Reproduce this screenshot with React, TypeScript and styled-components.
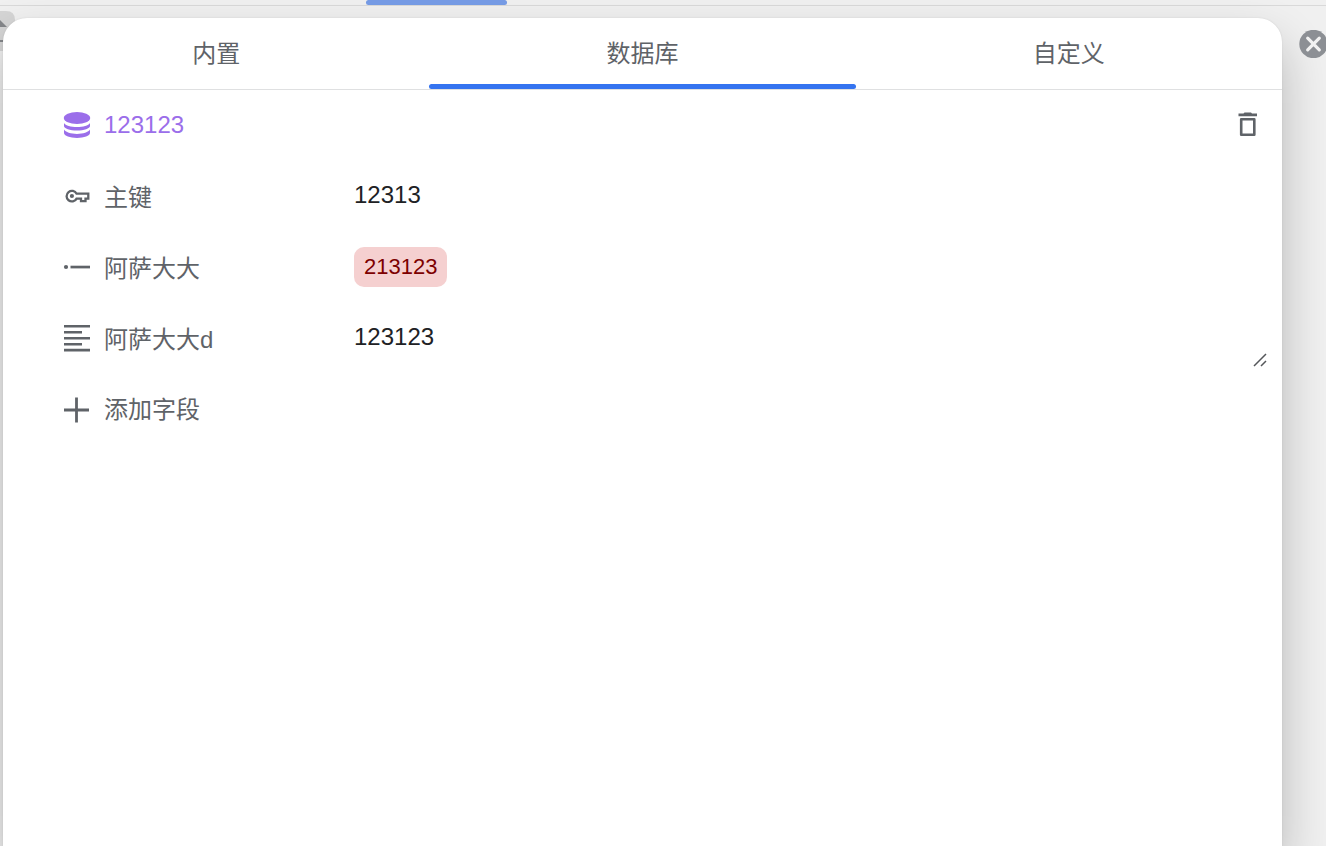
import React, { useState } from "react";
import styled, { createGlobalStyle } from "styled-components";

const GlobalStyle = createGlobalStyle`
  * { box-sizing: border-box; }
  body {
    margin: 0;
    background: #f0f0f0;
    font-family: "Liberation Sans", "Noto Sans CJK SC", sans-serif;
    font-size: 24px;
    line-height: 32px;
    color: #5f6368;
  }
  button, input, textarea { font: inherit; color: inherit; }
`;

const Page = styled.div`
  min-height: 100vh;
  display: flex;
  flex-direction: column;
  overflow: hidden;
`;

const TopBar = styled.header`
  height: 6px;
  border-bottom: 1px solid #d9d9d9;
  display: grid;
  grid-template-columns: 366px 141px 1fr;
`;

const TopIndicator = styled.span`
  grid-column: 2;
  height: 5px;
  border-radius: 3px;
  background: #769ce6;
`;

const Stage = styled.main`
  position: relative;
  flex: 1;
  display: grid;
  grid-template-columns: minmax(0, 1fr) 44px;
  padding: 12px 0 0 3px;
`;

const Behind = styled.svg`
  position: absolute;
  left: 0;
  top: 5px;
`;

const Dialog = styled.section`
  position: relative;
  background: #fff;
  border-radius: 24px 24px 0 0;
  box-shadow: 0 24px 48px rgba(0, 0, 0, 0.24), 0 0 2px rgba(0, 0, 0, 0.1);
`;

const Tabs = styled.nav`
  display: grid;
  grid-template-columns: repeat(3, 1fr);
  border-bottom: 1px solid #dfe0e1;
`;

const Tab = styled.button<{ $active: boolean }>`
  height: 71px;
  display: flex;
  flex-direction: column;
  align-items: center;
  justify-content: space-between;
  padding: 20px 0 0;
  border: 0;
  background: none;
  cursor: pointer;
  &::after {
    content: "";
    width: 100%;
    height: 5px;
    border-radius: 3px;
    background: ${(p) => (p.$active ? "#3574f0" : "transparent")};
  }
`;

const Body = styled.div`
  padding: 0 14px 0 60px;
`;

const Row = styled.div`
  min-height: 71px;
  display: grid;
  grid-template-columns: 28px 237px minmax(0, 1fr);
  column-gap: 13px;
  align-items: center;
`;

const TitleRow = styled(Row)`
  min-height: 70px;
  grid-template-columns: 28px minmax(0, 1fr) 40px;
  color: #9b6eea;
`;

const Title = styled.h1`
  margin: 0;
  font-size: 24px;
  font-weight: 400;
`;

const Label = styled.label`
  padding-top: 4px;
`;

const TextInput = styled.input`
  width: 100%;
  height: 40px;
  padding: 0 0 2px;
  border: 0;
  outline: 0;
  background: none;
  color: #202124;
`;

const TextAreaWrap = styled.div`
  position: relative;
  height: 60px;
`;

const TextArea = styled.textarea`
  display: block;
  width: 100%;
  height: 60px;
  padding: 13px 0;
  border: 0;
  outline: 0;
  resize: none;
  background: none;
  color: #202124;
`;

const Grip = styled.svg`
  position: absolute;
  right: 0;
  bottom: 0;
`;

const Tag = styled.button`
  justify-self: start;
  height: 40px;
  padding: 0 10px;
  border: 0;
  border-radius: 10px;
  background: #f5d0d0;
  color: #7d0000;
  font-size: 22px;
`;

const IconButton = styled.button`
  display: grid;
  place-items: center;
  height: 40px;
  padding: 0;
  border: 0;
  background: none;
  color: #5f6368;
  cursor: pointer;
`;

const AddButton = styled.button`
  display: flex;
  align-items: center;
  gap: 13px;
  height: 74px;
  padding: 0;
  border: 0;
  background: none;
  cursor: pointer;
`;

const CloseButton = styled.button`
  position: relative;
  width: 28px;
  height: 28px;
  margin: 12px 0 0 17px;
  padding: 0;
  border: 0;
  background: none;
  cursor: pointer;
`;

const Icon = styled.svg`
  display: block;
  width: 28px;
  height: 28px;
  flex: none;
`;

const DatabaseIcon = () => (
  <Icon viewBox="0 0 28 28" fill="currentColor" aria-hidden="true">
    <ellipse cx="14" cy="7" rx="13.200" ry="6" />
    <path d="M1 12c1.500 2.600 7 4 13 4s11.500-1.400 13-4v3c0 2.700-6 4.500-13 4.500S1 17.700 1 15z" />
    <path d="M1 18.600c1.500 2.800 7 4.300 13 4.300s11.500-1.500 13-4.300v3.500c0 2.800-6 4.900-13 4.900S1 24.900 1 22.100z" />
  </Icon>
);

const KeyIcon = () => (
  <Icon viewBox="0 0 28 28" fill="none" stroke="currentColor" strokeWidth="2.300" aria-hidden="true">
    <path d="M13.600 11.700A5.300 5.300 0 1 0 13.600 16.600H18V19.200H22.500V16.600H25.300V11.700Z" />
    <circle cx="8.900" cy="14" r="2.100" fill="currentColor" stroke="none" />
  </Icon>
);

const SingleLineIcon = () => (
  <Icon viewBox="0 0 28 28" fill="currentColor" aria-hidden="true">
    <circle cx="3" cy="14" r="2.100" />
    <path d="M7.500 12.700H27v2.700H7.500z" />
  </Icon>
);

const TextIcon = () => (
  <Icon viewBox="0 0 28 28" fill="currentColor" aria-hidden="true">
    <path d="M1 .900h26v2.700H1zM1 6.900h18v2.700H1zM1 12.900h26v2.700H1zM1 18.900h18v2.700H1zM1 24.700h26v2.700H1z" />
  </Icon>
);

const PlusIcon = () => (
  <Icon viewBox="0 0 28 28" stroke="currentColor" strokeWidth="2.800" aria-hidden="true">
    <path d="M1 14H26M13.500 1.500V26.500" />
  </Icon>
);

const TrashIcon = () => (
  <Icon viewBox="0 0 28 28" fill="none" aria-hidden="true">
    <path d="M9.500 2.500 10.500 1.500H17L18 2.500H23V5.300H4.500V2.500Z" fill="currentColor" />
    <path d="M7.200 8.200H20.300V23.800H7.200Z" stroke="currentColor" strokeWidth="2.600" strokeLinejoin="round" />
  </Icon>
);

const CloseIcon = () => (
  <Icon viewBox="0 0 28 28" aria-hidden="true">
    <circle cx="14.500" cy="14" r="14.200" fill="#8c8f94" />
    <path d="M8.700 8.200 20.300 19.800M20.300 8.200 8.700 19.800" stroke="#f2f2f2" strokeWidth="3.200" strokeLinecap="round" />
  </Icon>
);

const tabs = ["内置", "数据库", "自定义"];

export default function App() {
  const [active, setActive] = useState(1);
  return (
    <>
      <GlobalStyle />
      <Page>
        <TopBar>
          <TopIndicator />
        </TopBar>
        <Stage>
          <Behind width="20" height="44" aria-hidden="true">
            <path d="M0 0H6Q15 0 15 9V40H0Z" fill="#d5d5d5" />
            <path d="M0 9 7 16H0Z" fill="#85878a" />
            <path d="M0 29H3V31H0Z" fill="#85878a" />
          </Behind>
          <Dialog>
            <Tabs role="tablist">
              {tabs.map((name, i) => (
                <Tab
                  key={name}
                  type="button"
                  role="tab"
                  aria-selected={i === active}
                  $active={i === active}
                  onClick={() => setActive(i)}
                >
                  {name}
                </Tab>
              ))}
            </Tabs>
            <Body>
              <TitleRow>
                <DatabaseIcon />
                <Title>123123</Title>
                <IconButton type="button" aria-label="删除">
                  <TrashIcon />
                </IconButton>
              </TitleRow>
              <Row>
                <KeyIcon />
                <Label htmlFor="key">主键</Label>
                <TextInput id="key" defaultValue="12313" />
              </Row>
              <Row>
                <SingleLineIcon />
                <Label htmlFor="tag">阿萨大大</Label>
                <Tag id="tag" type="button">213123</Tag>
              </Row>
              <Row>
                <TextIcon />
                <Label htmlFor="text">阿萨大大d</Label>
                <TextAreaWrap>
                  <TextArea id="text" defaultValue="123123" />
                  <Grip width="16" height="16" fill="none" stroke="#55575a" strokeWidth="1.500" aria-hidden="true">
                    <path d="M2 14 14 2M9 14 14 9" />
                  </Grip>
                </TextAreaWrap>
              </Row>
              <AddButton type="button">
                <PlusIcon />
                添加字段
              </AddButton>
            </Body>
          </Dialog>
          <CloseButton type="button" aria-label="关闭">
            <CloseIcon />
          </CloseButton>
        </Stage>
      </Page>
    </>
  );
}
